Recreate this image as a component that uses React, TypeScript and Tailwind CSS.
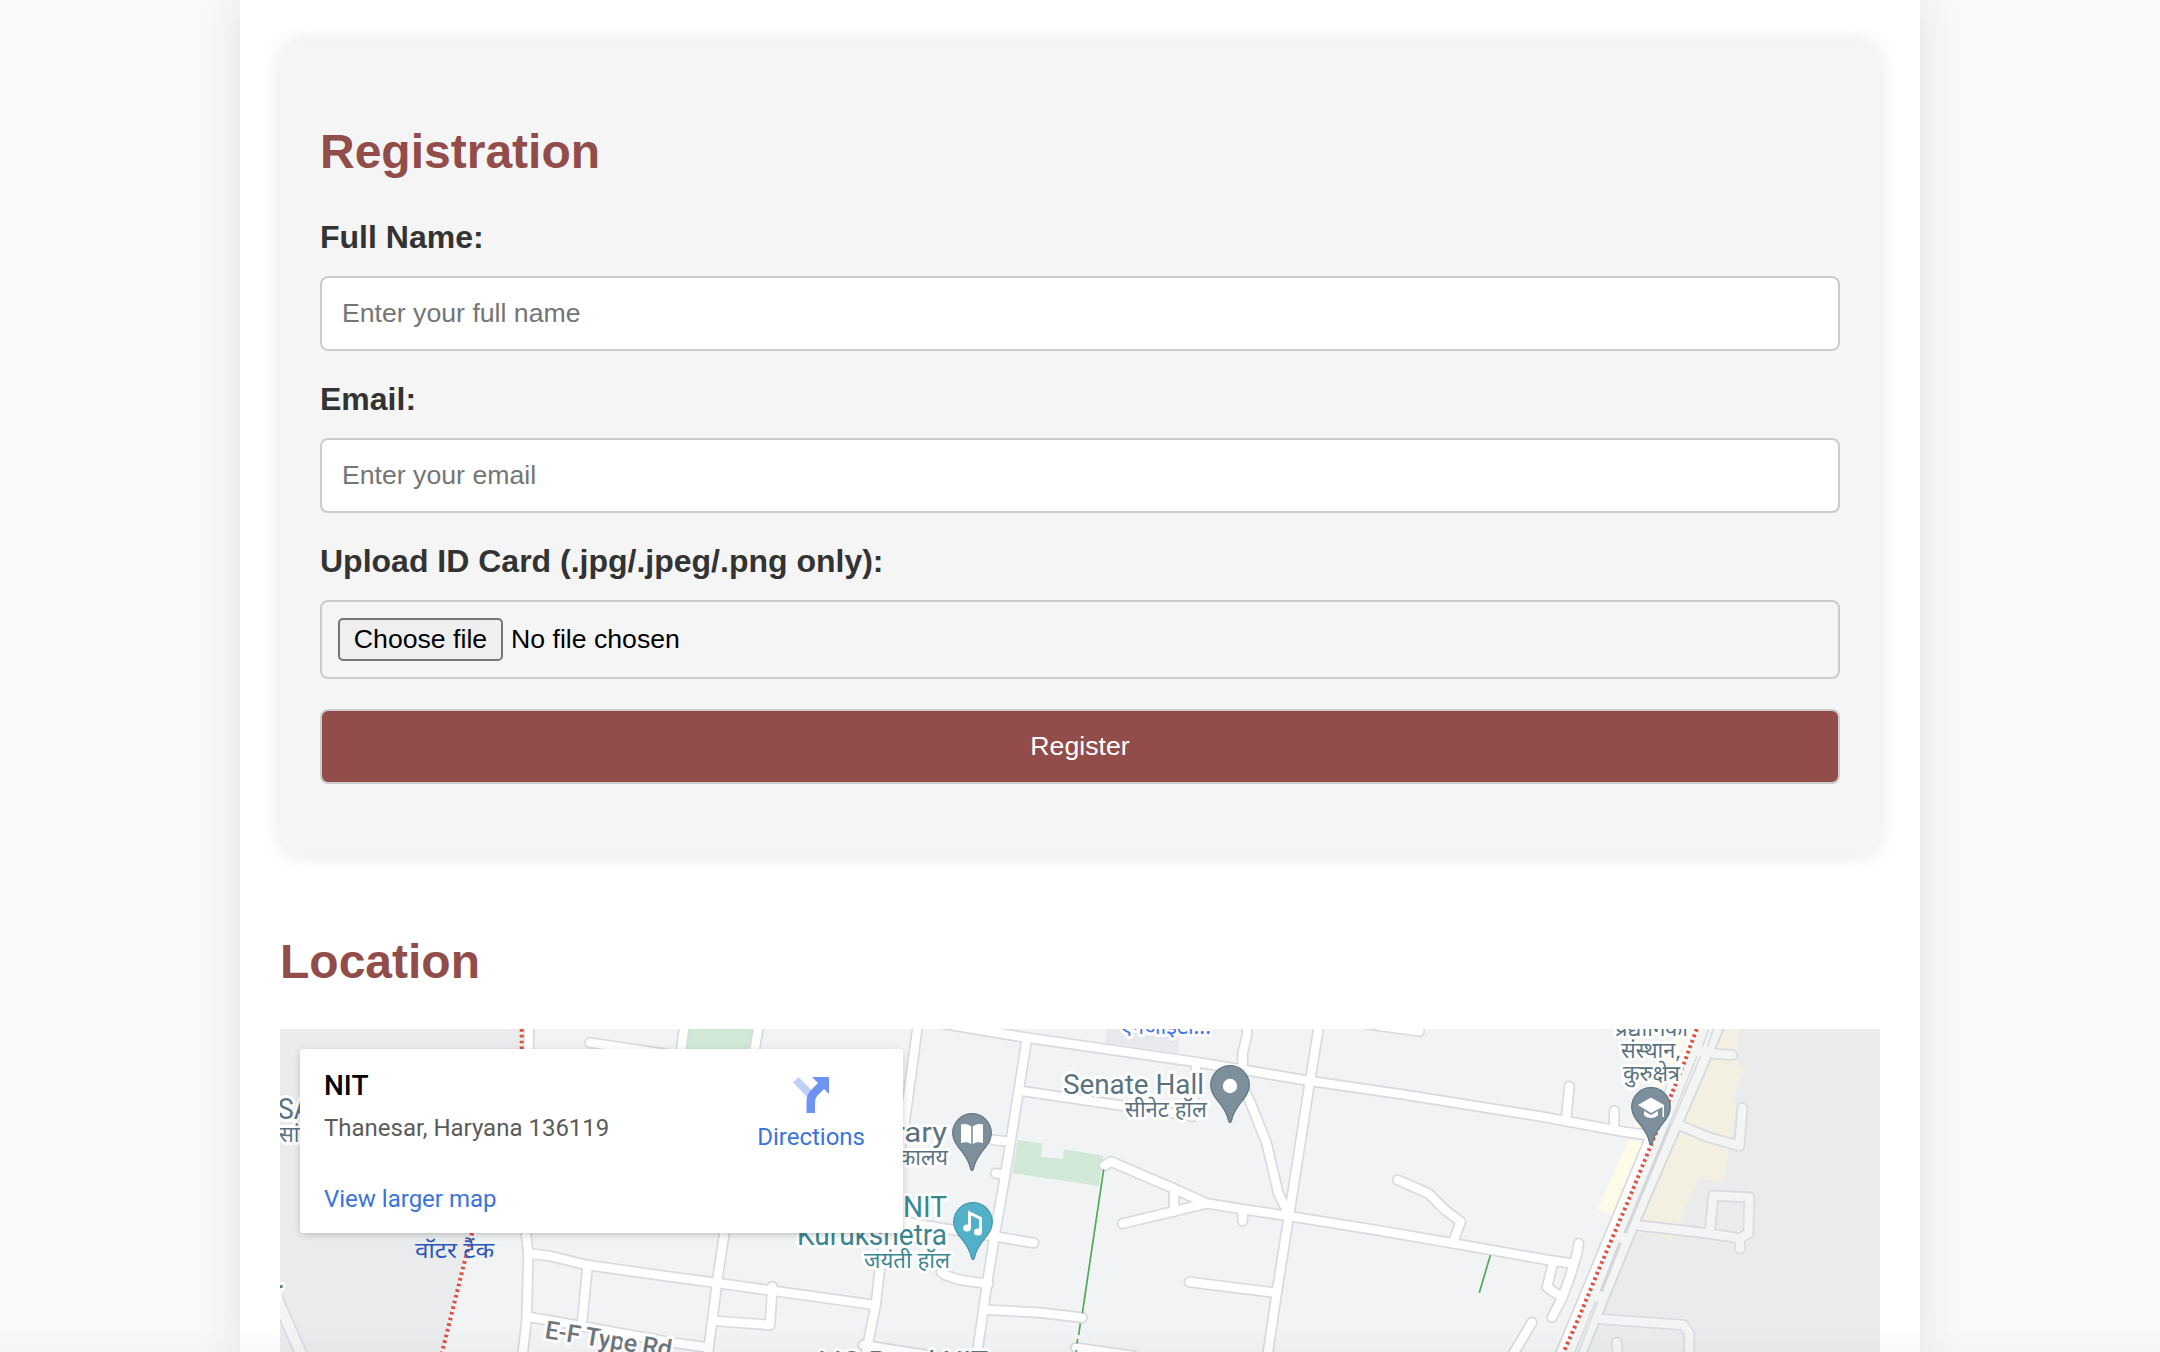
import type { ReactNode } from "react";

type Pt = [number, number];

// Map geometry is recorded on tiles drawn at three units per pixel.
const tile = (x: number) => `translate(${x - 280} -9) scale(0.33333)`;

type Road = { o: number; d: string; tone?: string; w?: number };

const roads: Road[] = [
  { o: 270, d: "M0 790L95 1005", tone: "#f3f5f5", w: 30 },
  { o: 1580, d: "M395 100L457 105", tone: "#f3f5f5" },
  { o: 1580, d: "M305 318L380 350L478 378L487 264", tone: "#f3f5f5" },
  { o: 1580, d: "M180 617L390 641L480 655L505 640L508 532L400 527L389 640", tone: "#f3f5f5" },
  { o: 1580, d: "M480 655L480 686", tone: "#f3f5f5" },
  { o: 1580, d: "M60 897L310 915L328 940L327 1010", tone: "#f3f5f5" },
  { o: 1580, d: "M110 967L114 1010", tone: "#f3f5f5" },
  { o: 270, d: "M777 0L768 640L775 700L770 900L757 1010" },
  { o: 270, d: "M785 702L840 708L950 735L1200 770L1350 790L1500 811L1800 853" },
  { o: 270, d: "M953 735L937 900" },
  { o: 270, d: "M770 890L850 903L1210 968L1310 982" },
  { o: 270, d: "M960 68L1230 108" },
  { o: 640, d: "M134 10L110 200" },
  { o: 640, d: "M357 10L253 640L232 780L203 1010" },
  { o: 640, d: "M834 10L795 300L720 740L708 850L676 1010" },
  { o: 640, d: "M670 975L860 1005" },
  { o: 640, d: "M900 10L1160 53L1660 125L1820 151L2010 183L2280 222L2700 289L2950 335L3030 346" },
  { o: 640, d: "M1160 60L1095 470L1065 640L1040 800L1010 1010" },
  { o: 640, d: "M1145 213L1460 259L1640 285" },
  { o: 1000, d: "M588 140L576 290" },
  { o: 640, d: "M1060 360L1110 365" },
  { o: 640, d: "M1067 460L1095 463" },
  { o: 640, d: "M730 595L940 630L1070 650L1181 669" },
  { o: 640, d: "M904 757L918 766L960 780L1045 792" },
  { o: 640, d: "M1030 869L1200 878L1326 893" },
  { o: 640, d: "M230 903L390 915L397 800" },
  { o: 1000, d: "M738 10L742 40L728 100L728 200L750 245L800 370L835 520L865 580" },
  { o: 1000, d: "M958 10L930 183L868 580L830 820L802 1010" },
  { o: 1380, d: "M-80 5L0 18L118 34" },
  { o: 1000, d: "M313 437L333 425L520 505L620 550L730 568L865 588L1140 632L1360 670L1650 721L1715 730" },
  { o: 1000, d: "M368 611L620 550" },
  { o: 1000, d: "M522 505L522 575" },
  { o: 1000, d: "M728 570L728 603" },
  { o: 1000, d: "M568 786L825 818" },
  { o: 1000, d: "M228 983L400 1008" },
  { o: 1380, d: "M53 480L145 520L195 570L242 605L218 670" },
  { o: 1380, d: "M568 199L558 300" },
  { o: 1380, d: "M703 272L702 325" },
  { o: 1380, d: "M596 670L590 705L570 770L546 835L516 892" },
  { o: 1380, d: "M520 725L501 802L540 828" },
  { o: 1380, d: "M456 907L395 1010" },
];

const halo = { paintOrder: "stroke", stroke: "#ffffff", strokeWidth: 6, strokeLinejoin: "round" } as const;
const latin = "Roboto, sans-serif";
const hindi = "'Noto Sans Devanagari', 'Noto Sans', sans-serif";

type LabelProps = {
  x: number;
  y: number;
  len: number;
  size: number;
  fill: string;
  font: string;
  children: string;
  anchor?: "start" | "end";
  outlined?: boolean;
};

function Label({ x, y, len, size, fill, font, children, anchor = "end", outlined = true }: LabelProps) {
  return (
    <text x={x - 280} y={y - 1029} textLength={len} lengthAdjust="spacingAndGlyphs" textAnchor={anchor} fontSize={size} fill={fill} fontFamily={font} {...(outlined ? halo : {})}>
      {children}
    </text>
  );
}

function Pin({ at, fill, edge, children }: { at: Pt; fill: string; edge: string; children: ReactNode }) {
  return (
    <g transform={`translate(${at[0] - 280} ${at[1] - 1029})`}>
      <path d="M0 37.5C-1.6 37.5 -1.6 34.5 -2.6 31.5C-5.5 23.500 -10 18.500 -14 13.500C-17 9.500 -19.300 5.500 -19.300 0A19.300 19.300 0 0 1 19.300 0C19.300 5.500 17 9.500 14 13.500C10 18.500 5.500 23.500 2.600 31.500C1.600 34.500 1.600 37.500 0 37.500Z" fill={fill} stroke={edge} strokeWidth="1.3" />
      {children}
    </g>
  );
}

function CampusMap() {
  return (
    <svg className="block h-[323px] w-[1600px]" viewBox="0 0 1600 323" fill="none">
      <rect width="1600" height="323" fill="#f1f3f5" />
      <g transform={tile(270)}>
        <path d="M0 0H755V350L600 640L513 1010H0Z" fill="#eaebed" />
      </g>
      <g transform={tile(1580)}>
        <path d="M350 0H1000V1010H-55L150 530Z" fill="#eaebed" />
        <path d="M145 360L192 368L100 585L52 568ZM300 20H345L180 330L160 325Z" fill="#fefbe9" />
        <path d="M430 20H476L474 135L497 143L455 250L470 256L430 490L358 473L275 662L180 622L300 320Z" fill="#f3efe1" />
      </g>
      <g transform={tile(640)}>
        <path d="M147 20H340L325 95H138Z" fill="#d1e8d7" />
      </g>
      <g transform={tile(1000)}>
        <path d="M53 360L127 370L122 410L188 417L192 388L310 407L297 498L37 460Z" fill="#d1e8d7" />
        <path d="M318 20H535V100L318 68Z" fill="#e8e9ed" />
      </g>
      <g strokeLinecap="round" strokeLinejoin="round" stroke="#d9dadf">
        {roads.map((r, i) => (
          <path key={i} transform={tile(r.o)} d={r.d} strokeWidth={(r.w ?? 25) + 10} />
        ))}
      </g>
      <g transform={tile(1580)}>
        <path d="M338 20L190 365L-78 1010H16L95 815L183 600L308 312L434 20Z" fill="#f3f5f5" stroke="#d5d6d9" strokeWidth="5" />
        <path d="M336 20L192 365L-75 1010H-55L0 885L150 530L270 235L352 20Z" fill="#ffffff" />
        <path d="M388 20L368 80M402 20L383 80M351 108L270 310M362 108L276 310" stroke="#d5d6d9" strokeWidth="4" />
        <path d="M272 310L135 640M121 668L63 815" stroke="#d5d6d9" strokeWidth="10" />
        <path d="M46 845L-20 1010M53 845L-10 1010" stroke="#d5d6d9" strokeWidth="4" />
      </g>
      <g strokeLinecap="round" strokeLinejoin="round">
        {roads.map((r, i) => (
          <path key={i} transform={tile(r.o)} d={r.d} strokeWidth={r.w ?? 25} stroke={r.tone ?? "#ffffff"} />
        ))}
      </g>
      <g stroke="#de503f" strokeWidth="12" strokeDasharray="8 9.5">
        <path transform={tile(270)} d="M755 27V350L606 640L580 740L513 1010" />
        <path transform={tile(1580)} d="M350 27L312 130L270 235L215 370L150 530L60 740L0 885L-55 1010" />
      </g>
      <g stroke="#4fa757" strokeWidth="5">
        <path transform={tile(1000)} d="M311 448L247 880M241 910L236 945M233 957L231 971M229 990L227 1010" />
        <path transform={tile(1380)} d="M331 706L298 818" />
      </g>

      <Label x={278} y={1119} len={50} size={29} fill="#5a7280" font={latin} anchor="start">SAC</Label>
      <Label x={279} y={1142} len={46} size={22} fill="#5a7280" font={hindi} anchor="start">सांस्कृ</Label>
      <Label x={415} y={1258} len={79} size={23} fill="#2a56b8" font={hindi} anchor="start" outlined={false}>वॉटर टैंक</Label>
      <Label x={947} y={1142} len={95} size={28} fill="#5a7280" font={latin}>Library</Label>
      <Label x={948} y={1165} len={82} size={22} fill="#5a7280" font={hindi}>पुस्तकालय</Label>
      <Label x={947} y={1217} len={44} size={29} fill="#3a8790" font={latin}>NIT</Label>
      <Label x={947} y={1245} len={150} size={29} fill="#3a8790" font={latin}>Kurukshetra</Label>
      <Label x={950} y={1268} len={86} size={22} fill="#3a8790" font={hindi}>जयंती हॉल</Label>
      <Label x={1204} y={1094} len={141} size={28.5} fill="#5a7280" font={latin}>Senate Hall</Label>
      <Label x={1207} y={1117} len={82} size={22} fill="#5a7280" font={hindi}>सीनेट हॉल</Label>
      <Label x={1211} y={1034} len={91} size={22} fill="#3b73e8" font={hindi}>एनआईटी...</Label>
      <Label x={1688} y={1036} len={73} size={22} fill="#5a7280" font={hindi}>प्रद्यौगिकी</Label>
      <Label x={1681} y={1058} len={60} size={22} fill="#5a7280" font={hindi}>संस्थान,</Label>
      <Label x={1680} y={1081} len={57} size={22} fill="#5a7280" font={hindi}>कुरुक्षेत्र</Label>
      <text transform="translate(264 309) rotate(9)" textLength="128" fontSize="25" fontWeight="500" fill="#6e757c" fontFamily={latin} {...halo}>E-F Type Rd</text>
      <text x="-6" y="270" fontSize="25" fontWeight="500" fill="#6e757c" fontFamily={latin} {...halo}>r</text>
      <Label x={988} y={1371} len={170} size={28} fill="#5a7280" font={latin}>LIG Road NIT</Label>

      <Pin at={[1230, 1085]} fill="#7d8f9b" edge="#607986"><circle cy="1" r="7.200" fill="#fff" /></Pin>
      <Pin at={[972, 1133]} fill="#7d8f9b" edge="#607986">
        <path d="M-11 -8.500C-7 -9.800 -3.500 -9 -.8 -6.500V11C-4 9 -7 9 -11 10ZM11 -8.500C7 -9.800 3.500 -9 .8 -6.500V11C4 9 7 9 11 10Z" fill="#fff" />
      </Pin>
      <Pin at={[973, 1222]} fill="#52b1c8" edge="#469aac">
        <path d="M-3.500 6V-9L7.500 -3.500V10" stroke="#fff" strokeWidth="3" />
        <ellipse cx="-6" cy="6" rx="4" ry="3.500" fill="#fff" /><ellipse cx="5" cy="10" rx="4" ry="3.500" fill="#fff" />
      </Pin>
      <Pin at={[1651, 1107]} fill="#7d8f9b" edge="#607986">
        <path d="M0 -9.500L13 -2V10H11.500V0L0 6L-13 -2ZM-7 4L0 8L7 4V8C4 12 -4 12 -7 8Z" fill="#fff" />
      </Pin>
    </svg>
  );
}

function DirectionsIcon() {
  return (
    <svg className="h-9 w-9" viewBox="0 0 36 36">
      <path d="M0 5.500L5.500 0L18 12.500L14 20Z" fill="#bfd0fb" />
      <path d="M19 0H36V17L31 12L24.500 18.500Q22 21 22 25V36H13.500V24Q13.500 17.500 18 13L25 6Z" fill="#6d94f5" />
    </svg>
  );
}

const labelCls = "block text-[32px] font-bold leading-[36px] text-[#333333]";
const inputCls = "block h-[75px] w-full rounded-[8px] border-2 border-[#cccccc] bg-white px-5 text-[26.667px] text-black outline-none placeholder:text-[#757575] placeholder:opacity-100";

export default function App() {
  return (
    <div className="relative h-[1352px] overflow-hidden bg-[#f9f9f9] font-['Liberation_Sans',Arial,sans-serif]">
      <main className="mx-auto h-full w-[1680px] bg-white px-10 pt-[42px] shadow-[0_0_40px_rgba(0,0,0,0.1)]">
        <section className="h-[813px] rounded-[20px] bg-[#f5f5f5] px-10 pt-[82px] shadow-[0_0_20px_rgba(0,0,0,0.1)]">
          <h2 className="text-[48px] font-bold leading-[56px] text-[#924d4a]">Registration</h2>
          <form className="pt-[39px]">
            <label className={labelCls}>Full Name:</label>
            <input className={`${inputCls} mt-[21px] mb-[30px]`} placeholder="Enter your full name" />
            <label className={labelCls}>Email:</label>
            <input className={`${inputCls} mt-[21px] mb-[30px]`} placeholder="Enter your email" />
            <label className={labelCls}>Upload ID Card (.jpg/.jpeg/.png only):</label>
            <div className="mt-[21px] mb-[30px] flex h-[79px] items-center rounded-[8px] border-2 border-[#cccccc] px-4 text-[26.667px] text-black">
              <button type="button" className="flex h-[43px] w-[165px] items-center justify-center rounded-[5px] border-2 border-[#767676] bg-[#efefef] pb-0.5 leading-[30px]">Choose file</button>
              <span className="ml-2 pb-0.5 leading-[30px]">No file chosen</span>
            </div>
            <button type="button" className="block h-[75px] w-full rounded-[8px] border-2 border-[#cccccc] bg-[#924d4a] pb-0.5 text-[26.667px] text-white">Register</button>
          </form>
        </section>
        <h2 className="mt-[79px] text-[48px] font-bold leading-[56px] text-[#924d4a]">Location</h2>
        <div className="relative mt-[39px]">
          <CampusMap />
          <div className="absolute left-5 top-5 flex h-[184px] w-[603px] justify-between rounded-[4px] bg-white pl-6 pr-[38px] font-[Roboto,sans-serif] shadow-[0_2px_8px_-2px_rgba(0,0,0,0.3)]">
            <div>
              <div className="mt-[21px] text-[28px] font-medium leading-[32px] text-black">NIT</div>
              <div className="mt-[12px] text-[24px] leading-[28px] text-[#5b5b5b]">Thanesar, Haryana 136119</div>
              <div className="mt-[43px] text-[24px] leading-[28px] text-[#3a73e0]">View larger map</div>
            </div>
            <div className="flex flex-col items-center pt-7 text-[24px] leading-[28px] text-[#3a73e0]">
              <DirectionsIcon />
              <span className="mt-[10px]">Directions</span>
            </div>
          </div>
        </div>
      </main>
      <div className="absolute inset-x-0 bottom-0 h-6 bg-linear-to-b from-transparent to-black/2" />
    </div>
  );
}
